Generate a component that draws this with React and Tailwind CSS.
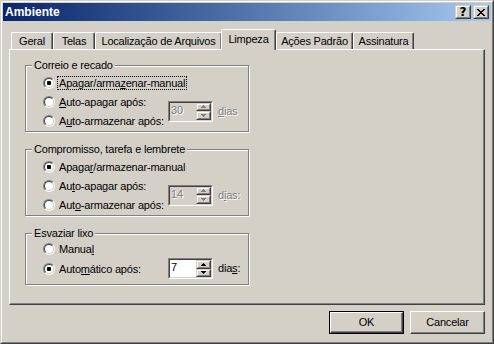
import React from "react";

function Mn({ t, u }) {
  return (
    <>
      {t.slice(0, u)}
      <span className="underline underline-offset-[1px]">{t[u]}</span>
      {t.slice(u + 1)}
    </>
  );
}

function Radio({ checked }) {
  return (
    <div className="w-[12px] h-[12px] shrink-0 flex rounded-full border border-t-[#808080] border-l-[#808080] border-r-white border-b-white">
      <div className="flex-1 flex items-center justify-center rounded-full border border-t-[#404040] border-l-[#404040] border-r-[#d4d0c8] border-b-[#d4d0c8] bg-white">
        {checked && <div className="w-[4px] h-[4px] rounded-[1px] bg-black" />}
      </div>
    </div>
  );
}

function RadioRow({ checked, focus, children }) {
  return (
    <div className="flex items-center h-full">
      <Radio checked={checked} />
      <span
        className={
          focus
            ? "ml-[2px] px-[1px] leading-[12px] border border-dotted border-black whitespace-nowrap"
            : "ml-[2px] px-[1px] leading-[12px] border border-transparent whitespace-nowrap"
        }
      >
        {children}
      </span>
    </div>
  );
}

function Arrow({ up, disabled }) {
  return (
    <svg width="5" height="3" viewBox="0 0 5 3" shapeRendering="crispEdges">
      <path
        d={up ? "M2 0h1v1h1v1h1v1H0V2h1V1h1z" : "M0 0h5v1H4v1H3v1H2V2H1V1H0z"}
        fill={disabled ? "#808080" : "#000000"}
      />
    </svg>
  );
}

function SpinBtn({ up, disabled }) {
  return (
    <div className="flex-1 flex border border-t-[#d4d0c8] border-l-[#d4d0c8] border-r-[#404040] border-b-[#404040]">
      <div className="flex-1 flex items-center justify-center border border-t-white border-l-white border-r-[#808080] border-b-[#808080] bg-[#d4d0c8]">
        <Arrow up={up} disabled={disabled} />
      </div>
    </div>
  );
}

function Spin({ value, disabled }) {
  return (
    <div className="w-[45px] h-[21px] flex border border-t-[#808080] border-l-[#808080] border-r-white border-b-white">
      <div
        className={
          disabled
            ? "flex-1 flex border border-t-[#404040] border-l-[#404040] border-r-[#d4d0c8] border-b-[#d4d0c8] bg-[#d4d0c8]"
            : "flex-1 flex border border-t-[#404040] border-l-[#404040] border-r-[#d4d0c8] border-b-[#d4d0c8] bg-white"
        }
      >
        <div
          className={
            disabled
              ? "flex-1 pl-[1px] pt-[1px] leading-[12px] text-[#808080] [text-shadow:1px_1px_0_#fff]"
              : "flex-1 pl-[1px] pt-[1px] leading-[12px] text-black"
          }
        >
          {value}
        </div>
        <div className="w-[15px] flex flex-col">
          <SpinBtn up disabled={disabled} />
          <SpinBtn disabled={disabled} />
        </div>
      </div>
    </div>
  );
}

function Group({ title, className, children }) {
  return (
    <div
      className={
        "relative w-[224px] border border-[#808080] shadow-[inset_1px_1px_0_#fff,1px_1px_0_#fff] " +
        className
      }
    >
      <span className="absolute -top-[7px] left-[6px] px-[2px] leading-[13px] bg-[#d4d0c8] whitespace-nowrap">
        {title}
      </span>
      {children}
    </div>
  );
}

function Tab({ children, className }) {
  return (
    <div
      className={
        "h-[17px] flex items-center justify-center border-t border-l border-r border-white border-r-[#404040] rounded-tl-[2px] rounded-tr-[2px] shadow-[inset_-1px_0_0_#808080] whitespace-nowrap " +
        className
      }
    >
      {children}
    </div>
  );
}

export default function App() {
  return (
    <div className="w-[494px] h-[344px] flex bg-[#d4d0c8] font-['Liberation_Sans',Arial,sans-serif] text-[11px] tracking-[-0.2px] text-black border border-t-[#d4d0c8] border-l-[#d4d0c8] border-r-[#404040] border-b-[#404040] select-none overflow-hidden">
      <div className="flex-1 flex flex-col p-[1px] border border-t-white border-l-white border-r-[#808080] border-b-[#808080]">
        {/* Title bar */}
        <div className="h-[18px] shrink-0 flex items-center justify-between pl-[2px] pr-[2px] bg-linear-to-r from-[#0a246a] to-[#a6caf0]">
          <span className="text-white font-bold text-[12px] tracking-normal leading-none">Ambiente</span>
          <div className="flex gap-[2px]">
            <div className="w-[16px] h-[14px] flex border border-t-[#d4d0c8] border-l-[#d4d0c8] border-r-[#404040] border-b-[#404040]">
              <div className="flex-1 flex items-center justify-center border border-t-white border-l-white border-r-[#808080] border-b-[#808080] bg-[#d4d0c8]">
                <span className="font-bold text-[12px] leading-none tracking-normal font-['DejaVu_Sans',sans-serif]">?</span>
              </div>
            </div>
            <div className="w-[16px] h-[14px] flex border border-t-[#d4d0c8] border-l-[#d4d0c8] border-r-[#404040] border-b-[#404040]">
              <div className="flex-1 flex items-center justify-center border border-t-white border-l-white border-r-[#808080] border-b-[#808080] bg-[#d4d0c8]">
                <svg width="8" height="7" viewBox="0 0 8 7" shapeRendering="crispEdges">
                  <path
                    d="M0 0h2v1H0zM6 0h2v1H6zM1 1h2v1H1zM5 1h2v1H5zM2 2h4v1H2zM3 3h2v1H3zM2 4h4v1H2zM1 5h2v1H1zM5 5h2v1H5zM0 6h2v1H0zM6 6h2v1H6z"
                    fill="#000"
                  />
                </svg>
              </div>
            </div>
          </div>
        </div>

        <div className="flex-1 flex flex-col px-[6px]">
          {/* Tabs */}
          <div className="relative z-10 h-[28px] shrink-0 flex items-end pl-[2px]">
            <Tab className="w-[42px]">Geral</Tab>
            <Tab className="w-[42px]">Telas</Tab>
            <Tab className="w-[127px]">Localização de Arquivos</Tab>
            <div className="relative z-10 h-[21px] w-[55px] -ml-[1px] -mb-[1px] pb-[2px] flex items-center justify-center bg-[#d4d0c8] border-t border-l border-r border-white border-r-[#404040] rounded-tl-[2px] rounded-tr-[2px] shadow-[inset_-1px_0_0_#808080]">
              Limpeza
            </div>
            <Tab className="w-[77px]">Ações Padrão</Tab>
            <Tab className="w-[61px]">Assinatura</Tab>
          </div>

          {/* Panel */}
          <div className="h-[256px] shrink-0 flex flex-col pt-[15px] pl-[15px] border border-t-white border-l-white border-r-[#404040] border-b-[#404040] shadow-[inset_-1px_-1px_0_#808080]">
            <Group title="Correio e recado" className="h-[67px] pt-[7px] pl-[17px]">
              <div className="grid grid-cols-[125px_45px_auto] grid-rows-[19px_19px_19px]">
                <div className="col-span-3">
                  <RadioRow checked focus>
                    <Mn t="Apagar/armazenar-manual" u={11} />
                  </RadioRow>
                </div>
                <div className="col-start-1 row-start-2">
                  <RadioRow>
                    <Mn t="Auto-apagar após:" u={0} />
                  </RadioRow>
                </div>
                <div className="col-start-1 row-start-3">
                  <RadioRow>
                    <Mn t="Auto-armazenar após:" u={1} />
                  </RadioRow>
                </div>
                <div className="col-start-2 row-start-2 row-span-2 self-center">
                  <Spin value="30" disabled />
                </div>
                <div className="col-start-3 row-start-2 row-span-2 self-center pl-[5px] text-[#808080] [text-shadow:1px_1px_0_#fff]">
                  <Mn t="dias" u={0} />
                </div>
              </div>
            </Group>

            <Group title="Compromisso, tarefa e lembrete" className="mt-[17px] h-[67px] pt-[7px] pl-[17px]">
              <div className="grid grid-cols-[125px_45px_auto] grid-rows-[19px_19px_19px]">
                <div className="col-span-3">
                  <RadioRow checked>
                    <Mn t="Apagar/armazenar-manual" u={5} />
                  </RadioRow>
                </div>
                <div className="col-start-1 row-start-2">
                  <RadioRow>
                    <Mn t="Auto-apagar após:" u={2} />
                  </RadioRow>
                </div>
                <div className="col-start-1 row-start-3">
                  <RadioRow>
                    <Mn t="Auto-armazenar após:" u={3} />
                  </RadioRow>
                </div>
                <div className="col-start-2 row-start-2 row-span-2 self-center">
                  <Spin value="14" disabled />
                </div>
                <div className="col-start-3 row-start-2 row-span-2 self-center pl-[5px] text-[#808080] [text-shadow:1px_1px_0_#fff]">
                  <Mn t="dias:" u={1} />
                </div>
              </div>
            </Group>

            <Group title="Esvaziar lixo" className="mt-[17px] h-[52px] pt-[6px] pl-[17px]">
              <div className="grid grid-cols-[125px_45px_auto] grid-rows-[18px_21px]">
                <div className="col-span-3">
                  <RadioRow>
                    <Mn t="Manual" u={5} />
                  </RadioRow>
                </div>
                <div className="col-start-1 row-start-2">
                  <RadioRow checked>
                    <Mn t="Automático após:" u={4} />
                  </RadioRow>
                </div>
                <div className="col-start-2 row-start-2">
                  <Spin value="7" />
                </div>
                <div className="col-start-3 row-start-2 self-center pl-[5px]">
                  <Mn t="dias:" u={3} />
                </div>
              </div>
            </Group>
          </div>

          {/* Buttons */}
          <div className="mt-[6px] flex justify-end gap-[6px]">
            <div className="w-[75px] h-[23px] flex border border-black">
              <div className="flex-1 flex border border-t-white border-l-white border-r-[#404040] border-b-[#404040]">
                <div className="flex-1 flex items-center justify-center shadow-[inset_-1px_-1px_0_#808080]">OK</div>
              </div>
            </div>
            <div className="w-[75px] h-[23px] flex border border-t-white border-l-white border-r-[#404040] border-b-[#404040]">
              <div className="flex-1 flex items-center justify-center shadow-[inset_-1px_-1px_0_#808080]">Cancelar</div>
            </div>
          </div>
        </div>
      </div>
    </div>
  );
}
